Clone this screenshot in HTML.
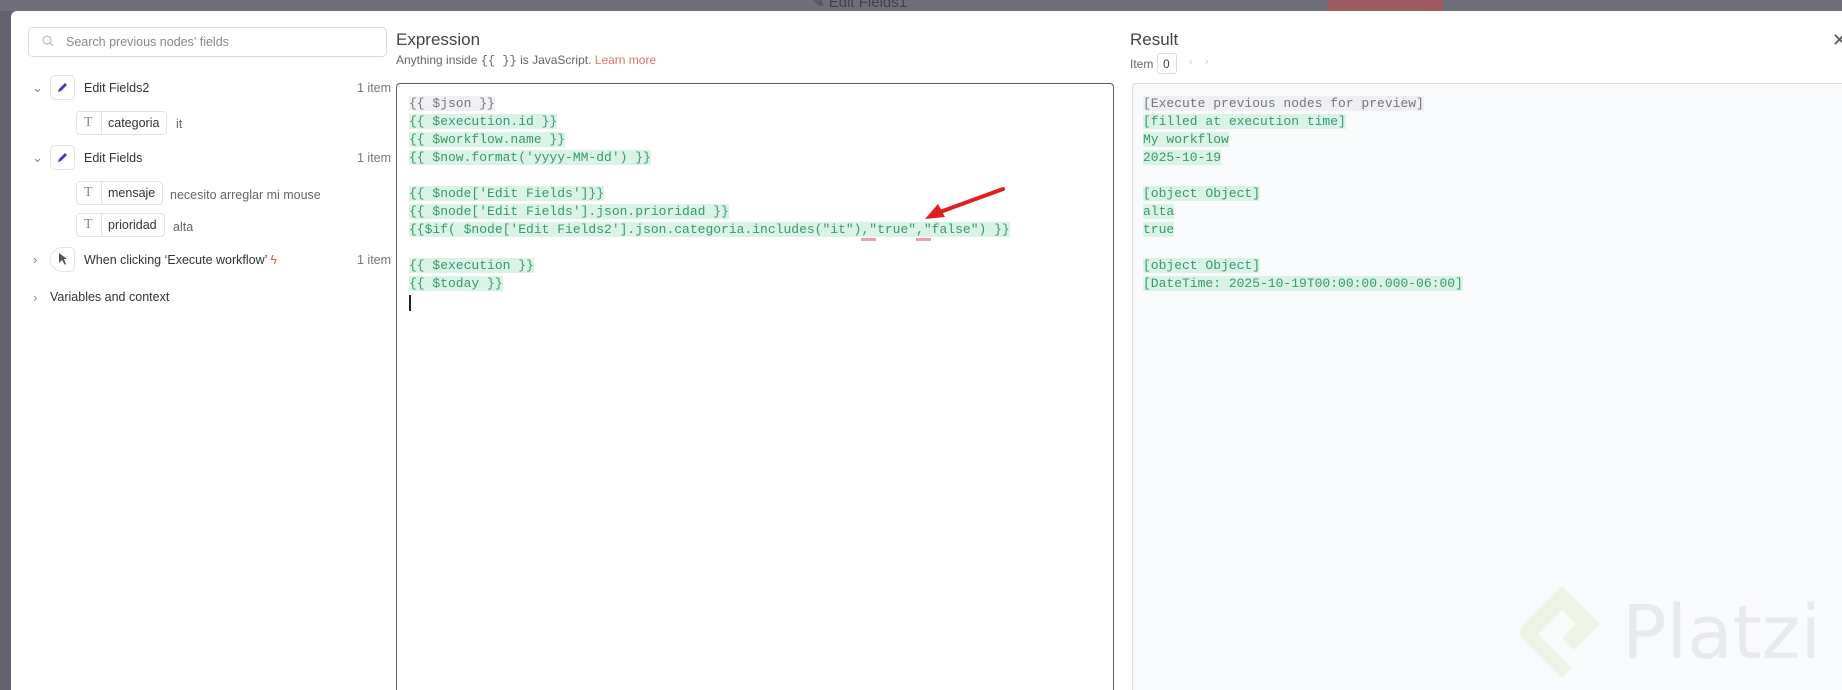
<!DOCTYPE html>
<html><head><meta charset="utf-8"><style>
*{box-sizing:border-box;margin:0;padding:0}
html,body{width:1842px;height:690px;overflow:hidden}
body{background:#62616f;font-family:"Liberation Sans",sans-serif;position:relative}
.abs{position:absolute}
.modal{left:11px;top:11px;width:1831px;height:679px;background:#fff;border-radius:6px 0 0 0}
.t{font-size:13px;color:#333;white-space:nowrap}
.mono{font-family:"Liberation Mono",monospace;font-size:13px;line-height:18px;white-space:pre}
.g{background:#d9f3e6;color:#3a9a68}
.gr{background:#eef0f3;color:#777}
.chip{height:24px;border:1px solid #e2e3e8;border-radius:4px;background:#fff}
.ib{width:25px;height:25px;border:1px solid #e2e3e8;border-radius:5px;background:#fff}
</style></head><body>
<div class="abs" style="left:0;top:0;width:1842px;height:11px;background:#6f6e7b;overflow:hidden">
<div class="abs t" style="left:812px;top:-7px;font-size:15px;color:#3f3f52">✎ Edit Fields1</div>
<div class="abs" style="left:1328px;top:0;width:115px;height:11px;background:#9c5a61"></div>
</div>
<div class="abs modal"></div>

<!-- search -->
<div class="abs" style="left:28px;top:27px;width:359px;height:30px;border:1px solid #d9dbe1;border-radius:5px"></div>
<svg class="abs" style="left:42px;top:35px" width="12" height="12"><circle cx="5" cy="5" r="4" fill="none" stroke="#bbb" stroke-width="1.2"/><line x1="8" y1="8" x2="11" y2="11" stroke="#bbb" stroke-width="1.2"/></svg>
<div class="abs t" style="left:66px;top:35px;color:#888;font-size:12.5px">Search previous nodes' fields</div>

<!-- tree -->
<div class="abs t" style="left:32px;top:80px;color:#888">⌄</div>
<div class="abs ib" style="left:50px;top:75px"></div>
<svg class="abs" style="left:55px;top:80px" width="15" height="15"><path d="M3 12 L4 9 L10 3 L12 5 L6 11 Z" fill="#3b3bd1"/></svg>
<div class="abs t" style="left:84px;top:81px;font-size:12.5px">Edit Fields2</div>
<div class="abs t" style="left:357px;top:81px;color:#777;font-size:12.5px">1 item</div>
<div class="abs chip" style="left:76px;top:111px;width:91px"></div>
<div class="abs" style="left:101px;top:112px;width:1px;height:22px;background:#e2e3e8"></div>
<div class="abs t" style="left:84px;top:115px;color:#888;font-family:'Liberation Serif',serif;font-size:14px">T</div>
<div class="abs t" style="left:108px;top:116px;font-size:12.5px">categoria</div>
<div class="abs t" style="left:176px;top:117px;color:#666;font-size:12.5px">it</div>

<div class="abs t" style="left:32px;top:150px;color:#888">⌄</div>
<div class="abs ib" style="left:50px;top:145px"></div>
<svg class="abs" style="left:55px;top:150px" width="15" height="15"><path d="M3 12 L4 9 L10 3 L12 5 L6 11 Z" fill="#3b3bd1"/></svg>
<div class="abs t" style="left:84px;top:151px;font-size:12.5px">Edit Fields</div>
<div class="abs t" style="left:357px;top:151px;color:#777;font-size:12.5px">1 item</div>
<div class="abs chip" style="left:76px;top:181px;width:87px"></div>
<div class="abs" style="left:101px;top:182px;width:1px;height:22px;background:#e2e3e8"></div>
<div class="abs t" style="left:84px;top:185px;color:#888;font-family:'Liberation Serif',serif;font-size:14px">T</div>
<div class="abs t" style="left:108px;top:186px;font-size:12.5px">mensaje</div>
<div class="abs t" style="left:170px;top:188px;color:#666;font-size:12.5px">necesito arreglar mi mouse</div>
<div class="abs chip" style="left:76px;top:213px;width:89px"></div>
<div class="abs" style="left:101px;top:214px;width:1px;height:22px;background:#e2e3e8"></div>
<div class="abs t" style="left:84px;top:217px;color:#888;font-family:'Liberation Serif',serif;font-size:14px">T</div>
<div class="abs t" style="left:108px;top:218px;font-size:12.5px">prioridad</div>
<div class="abs t" style="left:173px;top:220px;color:#666;font-size:12.5px">alta</div>

<div class="abs t" style="left:33px;top:252px;color:#888">›</div>
<div class="abs ib" style="left:50px;top:247px;border-radius:13px 5px 5px 13px"></div>
<svg class="abs" style="left:57px;top:252px" width="12" height="14"><path d="M2 1 L2 11 L5 8 L8 13 L9 12 L7 7 L10 7 Z" fill="#555"/></svg>
<div class="abs t" style="left:84px;top:253px;font-size:12.5px">When clicking ‘Execute workflow’ <span style="color:#e8564a">ϟ</span></div>
<div class="abs t" style="left:357px;top:253px;color:#777;font-size:12.5px">1 item</div>
<div class="abs t" style="left:33px;top:290px;color:#888">›</div>
<div class="abs t" style="left:50px;top:290px;font-size:12.5px">Variables and context</div>

<!-- expression -->
<div class="abs t" style="left:396px;top:30px;font-size:17px;color:#444">Expression</div>
<div class="abs t" style="left:396px;top:53px;font-size:12px;color:#666">Anything inside <span style="font-family:'Liberation Mono',monospace">{{ }}</span> is JavaScript. <span style="color:#e4735b">Learn more</span></div>
<div class="abs" style="left:396px;top:83px;width:718px;height:607px;border:1px solid #5e5c6e;border-bottom:none;border-radius:4px 4px 0 0"></div>
<div class="abs mono" style="left:409px;top:95px"><span class="gr">{{ $json }}</span>
<span class="g">{{ $execution.id }}</span>
<span class="g">{{ $workflow.name }}</span>
<span class="g">{{ $now.format('yyyy-MM-dd') }}</span>

<span class="g">{{ $node['Edit Fields']}}</span>
<span class="g">{{ $node['Edit Fields'].json.prioridad }}</span>
<span class="g">{{$if( $node['Edit Fields2'].json.categoria.includes("it"),"true","false") }}</span>

<span class="g">{{ $execution }}</span>
<span class="g">{{ $today }}</span></div>
<div class="abs" style="left:861px;top:238px;width:15px;height:3px;background:#e8a2ad"></div>
<div class="abs" style="left:916px;top:238px;width:15px;height:3px;background:#e8a2ad"></div>
<div class="abs" style="left:409px;top:295px;width:2px;height:16px;background:#222"></div>
<svg class="abs" style="left:900px;top:180px" width="120" height="50"><line x1="103" y1="9" x2="40" y2="32" stroke="#e21d1d" stroke-width="4" stroke-linecap="round"/><path d="M25 39 L38 24 L45 37 Z" fill="#e21d1d"/></svg>

<!-- result -->
<div class="abs t" style="left:1130px;top:30px;font-size:17px;color:#444">Result</div>
<div class="abs t" style="left:1130px;top:57px;font-size:12px;color:#666">Item</div>
<div class="abs" style="left:1157px;top:53px;width:20px;height:21px;border:1px solid #ddd;border-radius:3px"></div>
<div class="abs t" style="left:1163px;top:57px;font-size:12px;color:#444">0</div>
<div class="abs t" style="left:1189px;top:56px;font-size:11px;color:#ccc">‹ &nbsp;&nbsp;&nbsp;›</div>
<div class="abs t" style="left:1832px;top:30px;font-size:18px;color:#555">✕</div>
<div class="abs" style="left:1132px;top:83px;width:710px;height:607px;border:1px solid #dcdde2;border-right:none;border-bottom:none;border-radius:4px 0 0 0;background:#f9fafc"></div>
<div class="abs mono" style="left:1143px;top:95px"><span class="gr">[Execute previous nodes for preview]</span>
<span class="g">[filled at execution time]</span>
<span class="g">My workflow</span>
<span class="g">2025-10-19</span>

<span class="g">[object Object]</span>
<span class="g">alta</span>
<span class="g">true</span>

<span class="g">[object Object]</span>
<span class="g">[DateTime: 2025-10-19T00:00:00.000-06:00]</span></div>

<!-- watermark -->
<svg class="abs" style="left:1512px;top:578px" width="100" height="110"><path d="M50 8 L88 46 L62 72 L50 60 L64 46 L50 32 L26 56 L50 80 L60 90 L50 100 L12 62 Q4 55 12 46 Z" fill="#eef3e6"/></svg>
<div class="abs" style="left:1622px;top:590px;font-size:74px;color:#e9eaee;font-family:'DejaVu Sans',sans-serif">Platzi</div>
</body></html>
